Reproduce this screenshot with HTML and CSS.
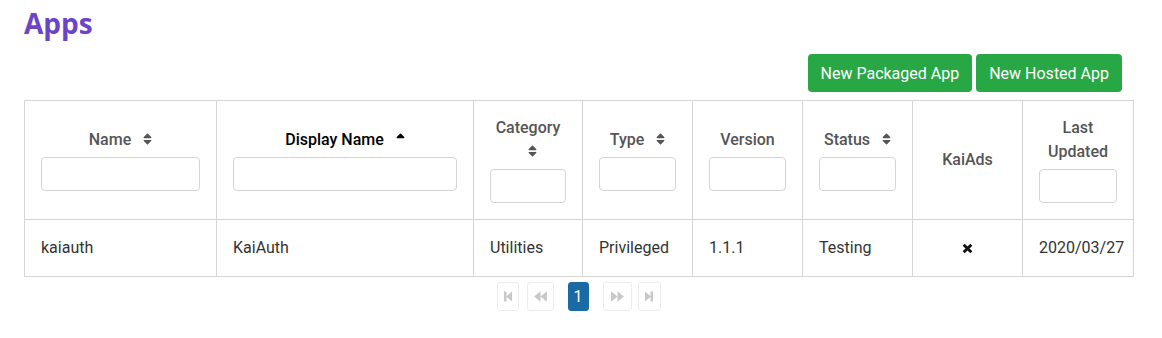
FILE: index.html
```html
<!DOCTYPE html>
<html lang="en">
<head>
    <meta charset="UTF-8">
    <meta name="viewport" content="width=device-width, initial-scale=1.0">
    <title>Apps</title>
    <link rel="stylesheet" href="styles.css">
</head>
<body>
    <div class="page">
        <h1 class="title">Apps</h1>
        <div class="actions">
            <button class="btn-green">New Packaged App</button>
            <button class="btn-green">New Hosted App</button>
        </div>
        <table class="apps">
            <colgroup>
                <col style="width: 192px">
                <col style="width: 257px">
                <col style="width: 109px">
                <col style="width: 110px">
                <col style="width: 110px">
                <col style="width: 110px">
                <col style="width: 110px">
                <col style="width: 111px">
            </colgroup>
            <thead>
                <tr>
                    <th>Name <svg class="sort" viewBox="0 0 320 512"><path d="M41 288h238c21.4 0 32.1 25.9 17 41L177 448c-9.4 9.4-24.6 9.4-33.9 0L24 329c-15.1-15.1-4.4-41 17-41zm255-105L177 64c-9.4-9.4-24.6-9.4-33.9 0L24 183c-15.1 15.1-4.4 41 17 41h238c21.4 0 32.1-25.9 17-41z"/></svg><input type="text" class="filter"></th>
                    <th class="sorted">Display Name <svg class="sort" viewBox="0 0 320 512"><path d="M279 224H41c-21.4 0-32.1-25.9-17-41L143 64c9.4-9.4 24.6-9.4 33.9 0l119 119c15.2 15.1 4.5 41-16.9 41z"/></svg><input type="text" class="filter"></th>
                    <th>Category <svg class="sort" viewBox="0 0 320 512"><path d="M41 288h238c21.4 0 32.1 25.9 17 41L177 448c-9.4 9.4-24.6 9.4-33.9 0L24 329c-15.1-15.1-4.4-41 17-41zm255-105L177 64c-9.4-9.4-24.6-9.4-33.9 0L24 183c-15.1 15.1-4.4 41 17 41h238c21.4 0 32.1-25.9 17-41z"/></svg><input type="text" class="filter"></th>
                    <th>Type <svg class="sort" viewBox="0 0 320 512"><path d="M41 288h238c21.4 0 32.1 25.9 17 41L177 448c-9.4 9.4-24.6 9.4-33.9 0L24 329c-15.1-15.1-4.4-41 17-41zm255-105L177 64c-9.4-9.4-24.6-9.4-33.9 0L24 183c-15.1 15.1-4.4 41 17 41h238c21.4 0 32.1-25.9 17-41z"/></svg><input type="text" class="filter"></th>
                    <th>Version<input type="text" class="filter"></th>
                    <th>Status <svg class="sort" viewBox="0 0 320 512"><path d="M41 288h238c21.4 0 32.1 25.9 17 41L177 448c-9.4 9.4-24.6 9.4-33.9 0L24 329c-15.1-15.1-4.4-41 17-41zm255-105L177 64c-9.4-9.4-24.6-9.4-33.9 0L24 183c-15.1 15.1-4.4 41 17 41h238c21.4 0 32.1-25.9 17-41z"/></svg><input type="text" class="filter"></th>
                    <th>KaiAds</th>
                    <th>Last Updated<input type="text" class="filter"></th>
                </tr>
            </thead>
            <tbody>
                <tr>
                    <td>kaiauth</td>
                    <td>KaiAuth</td>
                    <td>Utilities</td>
                    <td>Privileged</td>
                    <td>1.1.1</td>
                    <td>Testing</td>
                    <td class="center"><svg class="cross" viewBox="0 0 10 10"><path d="M1.5 1.5L8.5 8.5M8.5 1.5L1.5 8.5"/></svg></td>
                    <td>2020/03/27</td>
                </tr>
            </tbody>
        </table>
        <div class="pager">
            <span class="pg pg-first"><svg viewBox="0 0 12 12"><rect x="2" y="1" width="2.5" height="10"/><path d="M10 1v10L4 6z"/></svg></span>
            <span class="pg pg-prev"><svg viewBox="0 0 14 12"><path d="M7 1v10L1 6zM13 1v10L7 6z"/></svg></span>
            <span class="pg pg-active">1</span>
            <span class="pg pg-next"><svg viewBox="0 0 14 12"><path d="M1 1v10l6-5zM7 1v10l6-5z"/></svg></span>
            <span class="pg pg-last"><svg viewBox="0 0 12 12"><path d="M2 1v10l6-5z"/><rect x="7.5" y="1" width="2.5" height="10"/></svg></span>
        </div>
    </div>
</body>
</html>
```

FILE: styles.css
```css
body {
    margin: 0;
    font-family: Roboto, "Liberation Sans", sans-serif;
    background-color: #ffffff;
    color: #333;
}
.page {
    padding: 0 24px;
    width: 1109px;
}
.title {
    font-family: "Open Sans", sans-serif;
    font-size: 28px;
    font-weight: 700;
    color: #6c44c8;
    margin: 0;
    padding-top: 3px;
    line-height: 40px;
}
.actions {
    display: flex;
    justify-content: flex-end;
    gap: 4px;
    margin: 11px 11px 8px 0;
}
.btn-green {
    background-color: #28a745;
    color: white;
    border: none;
    border-radius: 4px;
    height: 38px;
    padding: 0 13px;
    font-family: Roboto, sans-serif;
    font-size: 16px;
    cursor: pointer;
}
.apps {
    width: 1109px;
    table-layout: fixed;
    border-collapse: collapse;
    font-size: 16px;
}
.apps th, .apps td {
    border: 1px solid #d4d4d4;
}
.apps th {
    padding: 15px 16px 16px;
    font-weight: 500;
    color: #555;
    line-height: 24px;
    text-align: center;
    vertical-align: middle;
}
.apps th.sorted {
    color: #000;
}
.sort {
    width: 9px;
    height: 14px;
    fill: #555;
    margin-left: 8px;
    vertical-align: -1px;
}
.sorted .sort {
    fill: #000;
}
.filter {
    display: block;
    box-sizing: border-box;
    width: 100%;
    height: 34px;
    margin-top: 5px;
    border: 1px solid #d4d4d4;
    border-radius: 4px;
}
.apps td {
    padding: 16px;
    line-height: 24px;
    color: #333;
}
.apps td.center {
    text-align: center;
}
.cross {
    width: 11px;
    height: 11px;
    stroke: #111;
    stroke-width: 2.6;
    vertical-align: -1px;
}
.pager {
    display: flex;
    justify-content: center;
    align-items: center;
    margin-top: 5px;
}
.pg {
    display: flex;
    align-items: center;
    justify-content: center;
    box-sizing: border-box;
    height: 29px;
    border: 1px solid #ececec;
    border-radius: 3px;
}
.pg svg {
    fill: #c8c8c8;
    height: 13px;
}
.pg-first { width: 22px; margin-right: 8px; }
.pg-first svg, .pg-last svg { width: 12px; }
.pg-prev { width: 27px; margin-right: 14px; }
.pg-prev svg, .pg-next svg { width: 15px; }
.pg-active {
    width: 21px;
    background-color: #1b6aa3;
    border-color: #1b6aa3;
    color: white;
    font-size: 16px;
    margin-right: 14px;
}
.pg-next { width: 29px; margin-right: 6px; }
.pg-last { width: 23px; }
```
